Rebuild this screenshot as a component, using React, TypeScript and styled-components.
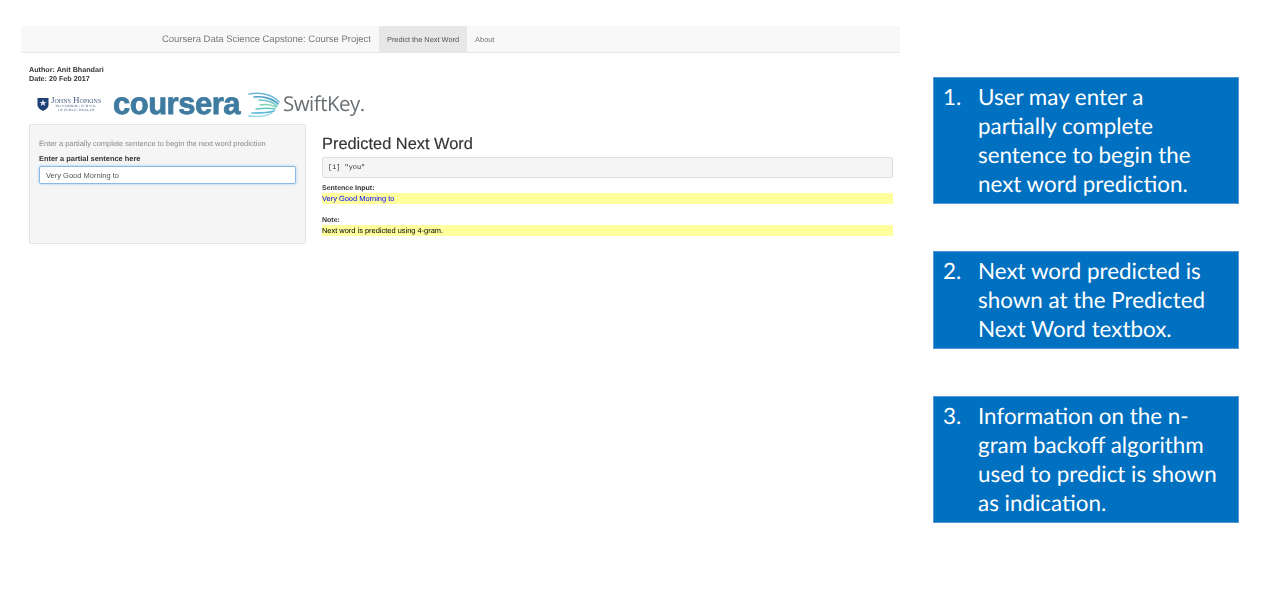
import React from 'react';
import styled, { createGlobalStyle } from 'styled-components';

const GlobalStyle = createGlobalStyle`
  html, body {
    margin: 0;
    padding: 0;
    background: #fff;
  }
  body {
    font-family: 'Liberation Sans', Arial, sans-serif;
    text-rendering: geometricPrecision;
  }
`;

const Page = styled.div`
  width: 1277px;
  height: 601px;
  overflow: hidden;
  display: flex;
  align-items: flex-start;
  box-sizing: border-box;
  padding: 26px 0 0 21px;
`;

const AppShot = styled.div`
  width: 879px;
  flex: none;
  filter: blur(0.35px);
  color: #333;
`;

const Navbar = styled.nav`
  height: 26px;
  display: flex;
  align-items: stretch;
  padding-left: 141px;
  background: #f8f8f8;
  border-bottom: 1px solid #e7e7e7;
`;

const Brand = styled.div`
  font-size: 9.47px;
  line-height: 27px;
  color: #777;
  margin-right: 8px;
`;

const NavItem = styled.div<{ $active?: boolean }>`
  font-size: 7.4px;
  line-height: 27px;
  padding: 0 8px;
  color: ${(p) => (p.$active ? '#555' : '#777')};
  background: ${(p) => (p.$active ? '#e7e7e7' : 'transparent')};
`;

const Content = styled.div`
  padding: 12px 7px 0 8px;
`;

const Meta = styled.div`
  font-size: 7.2px;
  line-height: 9px;
  font-weight: 700;
  color: #333;
`;

const LogoRow = styled.div`
  height: 28px;
  margin: 7px 0 6px;
  padding-left: 8px;
  display: flex;
  align-items: center;
`;

const Jhu = styled.div`
  display: flex;
  align-items: flex-start;
  gap: 2px;
  width: 76px;
  svg {
    flex: none;
    margin-top: 1px;
  }
`;

const JhuText = styled.div`
  font-family: 'Liberation Serif', serif;
  color: #4a5f80;
  text-align: center;
  white-space: nowrap;
`;

const JhuName = styled.div`
  font-size: 9px;
  line-height: 9px;
  font-variant: small-caps;
`;

const JhuSub = styled.div`
  font-size: 3.6px;
  line-height: 3.8px;
  letter-spacing: 0.2px;
  text-transform: uppercase;
`;

const CourseraMark = styled.div`
  font-family: 'Liberation Sans', sans-serif;
  font-weight: 700;
  font-size: 31px;
  letter-spacing: -0.5px;
  line-height: 28px;
  color: #3f7ba0;
  -webkit-text-stroke: 0.8px #3f7ba0;
`;

const SwiftKeyLogo = styled.div`
  margin-left: 8px;
  display: flex;
  align-items: center;
  gap: 3px;
`;

const SwiftKeyName = styled.div`
  font-family: 'Open Sans', sans-serif;
  font-weight: 400;
  font-size: 20.5px;
  letter-spacing: -0.5px;
  color: #6a7073;
`;

const Columns = styled.div`
  display: flex;
  align-items: flex-start;
`;

const Sidebar = styled.div`
  width: 277px;
  height: 120px;
  flex: none;
  box-sizing: border-box;
  padding: 14px 9px;
  background: #f5f5f5;
  border: 1px solid #e3e3e3;
  border-radius: 2px;
`;

const HelpText = styled.div`
  font-size: 7.47px;
  line-height: 10px;
  color: #8a8a8a;
`;

const FieldLabel = styled.label`
  display: block;
  margin-top: 5px;
  font-size: 7.43px;
  line-height: 10px;
  font-weight: 700;
`;

const SentenceInput = styled.input`
  display: block;
  width: 100%;
  height: 18px;
  margin-top: 2px;
  box-sizing: border-box;
  padding: 0 6px;
  font: 7.5px 'Liberation Sans', sans-serif;
  color: #555;
  background: #fff;
  border: 1px solid #8cb9e3;
  border-radius: 2px;
  box-shadow: 0 0 3px rgba(102, 175, 233, 0.6);
  outline: none;
`;

const MainPanel = styled.div`
  flex: 1;
  margin-left: 16px;
`;

const Heading = styled.h2`
  margin: 10px 0 3px;
  font-size: 16.4px;
  line-height: 20px;
  font-weight: 400;
  color: #333;
  -webkit-text-stroke: 0.15px #333;
`;

const OutputBox = styled.pre`
  margin: 0 0 6px;
  height: 21px;
  box-sizing: border-box;
  padding: 0 5px;
  font: 6.9px/20px 'Liberation Mono', monospace;
  color: #333;
  background: #f5f5f5;
  border: 1px solid #ddd;
  border-radius: 2px;
`;

const ResultLabel = styled.div`
  font-size: 7px;
  line-height: 9px;
  font-weight: 700;
`;

const Highlight = styled.div<{ $blue?: boolean }>`
  height: 11px;
  margin-bottom: 12px;
  font-size: 7.45px;
  line-height: 12px;
  color: ${(p) => (p.$blue ? '#0000ff' : '#000')};
  background: #ffff9e;
`;

const Notes = styled.div`
  margin-left: 33px;
  padding-top: 51px;
  width: 306px;
  flex: none;
  display: flex;
  flex-direction: column;
  gap: 47px;
`;

const Note = styled.div`
  display: flex;
  box-sizing: border-box;
  padding: 4px 10px 5px 9px;
  background: #0070c0;
  border: 1px solid #5b9bd5;
  color: #fff;
  font-family: Lato, 'Open Sans', sans-serif;
  font-size: 22.4px;
  line-height: 29px;
`;

const NoteNumber = styled.div`
  width: 35px;
  flex: none;
`;

const NoteLine = styled.div`
  white-space: nowrap;
`;

const notes = [
  {
    n: '1.',
    lines: ['User may enter a', 'partially complete', 'sentence to begin the', 'next word prediction.'],
  },
  {
    n: '2.',
    lines: ['Next word predicted is', 'shown at the Predicted', 'Next Word textbox.'],
  },
  {
    n: '3.',
    lines: ['Information on the n-', 'gram backoff algorithm', 'used to predict is shown', 'as indication.'],
  },
];

function App() {
  return (
    <Page>
      <GlobalStyle />
      <AppShot>
        <Navbar>
          <Brand>Coursera Data Science Capstone: Course Project</Brand>
          <NavItem $active>Predict the Next Word</NavItem>
          <NavItem>About</NavItem>
        </Navbar>
        <Content>
          <Meta>Author: Anit Bhandari</Meta>
          <Meta>Date: 20 Feb 2017</Meta>
          <LogoRow>
            <Jhu>
              <svg width="12" height="14" viewBox="0 0 12 14">
                <path d="M0.5 1 H11.5 V8 C11.5 11 8 13 6 14 C4 13 0.5 11 0.5 8 Z" fill="#1f3f77" />
                <path d="M6 2.5 L7 5 L9.5 5 L7.5 6.6 L8.3 9 L6 7.6 L3.7 9 L4.5 6.6 L2.5 5 L5 5 Z" fill="#dfe6f0" />
              </svg>
              <JhuText>
                <JhuName>Johns Hopkins</JhuName>
                <JhuSub>Bloomberg School</JhuSub>
                <JhuSub>of Public Health</JhuSub>
              </JhuText>
            </Jhu>
            <CourseraMark>coursera</CourseraMark>
            <SwiftKeyLogo>
              <svg width="32" height="25" viewBox="0 0 32 25" fill="none" strokeLinecap="round">
                <path d="M1 2 C12 0 24 2 31 10" stroke="#6fb7d8" strokeWidth="1.6" />
                <path d="M6 5 C14 4 24 6 30 12" stroke="#4f9fc4" strokeWidth="1.6" />
                <path d="M11 8 C18 8 25 10 29 14" stroke="#62c4c0" strokeWidth="1.4" />
                <path d="M12 13 C18 12 24 13 28 15" stroke="#78d6b0" strokeWidth="1.4" />
                <path d="M8 17 C15 16 23 16 27 17" stroke="#62c9c4" strokeWidth="1.5" />
                <path d="M4 21 C12 21 21 21 26 19" stroke="#5fb9dc" strokeWidth="1.6" />
                <path d="M1 24 C10 25 19 24 24 21" stroke="#8fd3e8" strokeWidth="1.4" />
              </svg>
              <SwiftKeyName>SwiftKey.</SwiftKeyName>
            </SwiftKeyLogo>
          </LogoRow>
          <Columns>
            <Sidebar>
              <HelpText>Enter a partially complete sentence to begin the next word prediction</HelpText>
              <FieldLabel>Enter a partial sentence here</FieldLabel>
              <SentenceInput defaultValue="Very Good Morning to" />
            </Sidebar>
            <MainPanel>
              <Heading>Predicted Next Word</Heading>
              <OutputBox>[1] "you"</OutputBox>
              <ResultLabel>Sentence Input:</ResultLabel>
              <Highlight $blue>Very Good Morning to</Highlight>
              <ResultLabel>Note:</ResultLabel>
              <Highlight>Next word is predicted using 4-gram.</Highlight>
            </MainPanel>
          </Columns>
        </Content>
      </AppShot>
      <Notes>
        {notes.map((note) => (
          <Note key={note.n}>
            <NoteNumber>{note.n}</NoteNumber>
            <div>
              {note.lines.map((line) => (
                <NoteLine key={line}>{line}</NoteLine>
              ))}
            </div>
          </Note>
        ))}
      </Notes>
    </Page>
  );
}

export default App;
